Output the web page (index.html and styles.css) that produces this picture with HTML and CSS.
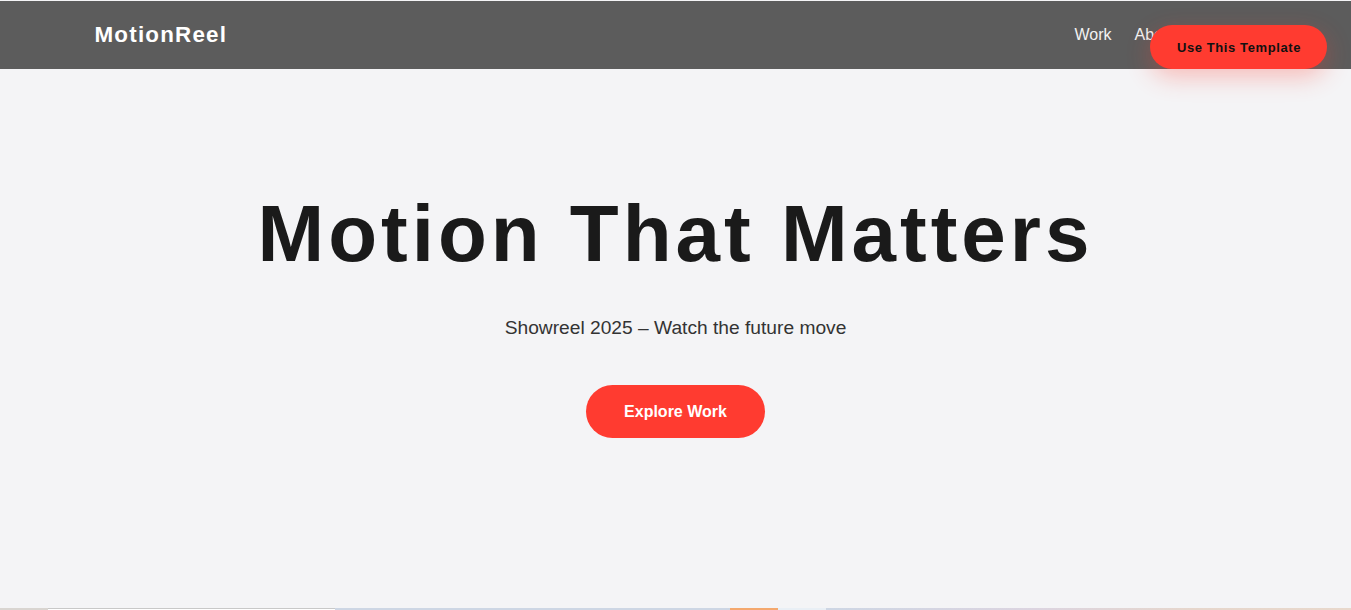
FILE: index.html
```html
<!DOCTYPE html>
<html lang="en">
<head>
<meta charset="utf-8">
<title>MotionReel</title>
<link rel="stylesheet" href="styles.css">
</head>
<body>
<div class="page">
  <header class="site-header">
    <div class="container header-inner">
      <div class="logo">MotionReel</div>
      <nav class="nav">
        <a href="#">Work</a>
        <a href="#">About</a>
        <a href="#">Contact</a>
      </nav>
    </div>
  </header>
  <a class="template-btn" href="#">Use This Template</a>
  <section class="hero">
    <h1 class="hero-title">Motion That Matters</h1>
    <p class="hero-sub">Showreel 2025 – Watch the future move</p>
    <a class="hero-btn" href="#">Explore Work</a>
  </section>
  <section class="strip">
    <div class="seg seg-a"></div>
    <div class="seg seg-b"></div>
    <div class="seg seg-c"></div>
    <div class="seg seg-d"></div>
    <div class="seg seg-e"></div>
    <div class="seg seg-f"></div>
  </section>
</div>
</body>
</html>
```
FILE: styles.css
```css
* { box-sizing: border-box; }
html, body { margin: 0; padding: 0; }
body {
  background: #f4f4f6;
  font-family: "Liberation Sans", Arial, sans-serif;
  color: #1a1a1a;
  overflow: hidden;
}
.page { padding-top: 1px; position: relative; }
a { text-decoration: none; }

.site-header {
  background: #5c5c5c;
  height: 68px;
}
.container {
  max-width: 1200px;
  margin: 0 auto;
  padding: 0 20px;
}
.header-inner {
  height: 100%;
  display: flex;
  align-items: center;
  justify-content: space-between;
}
.logo {
  color: #ffffff;
  font-weight: 700;
  font-size: 22.4px;
  letter-spacing: 1.2px;
  margin-left: -1px;
}
.nav {
  display: flex;
  gap: 23px;
  padding-right: 1px;
}
.nav a {
  color: #f2f2f2;
  font-size: 16px;
}

.template-btn {
  position: absolute;
  top: 25px;
  right: 24px;
  height: 44px;
  padding: 0 26px 0 27px;
  display: flex;
  align-items: center;
  background: #ff3b30;
  color: #111;
  font-weight: 700;
  font-size: 13px;
  letter-spacing: 0.6px;
  border-radius: 999px;
  box-shadow: 0 8px 24px rgba(255, 59, 48, 0.3);
}

.hero {
  height: 539px;
  display: flex;
  flex-direction: column;
  align-items: center;
  padding-top: 119px;
}
.hero-title {
  margin: 0;
  font-size: 80px;
  line-height: 92px;
  font-weight: 700;
  letter-spacing: 4px;
  color: #1a1a1a;
}
.hero-sub {
  margin: 37px 0 0;
  font-size: 19.2px;
  line-height: 22px;
  color: #333;
}
.hero-btn {
  margin-top: 46px;
  background: #ff3b30;
  color: #fff;
  font-weight: 700;
  font-size: 16px;
  line-height: 19px;
  padding: 17px 38px;
  border-radius: 999px;
}

.strip {
  display: flex;
  height: 200px;
}
.seg { height: 100%; }
.seg-a { width: 48px; background: #d9d5d1; }
.seg-b { width: 287px; background: #ffffff; border-top: 1px solid #c8c8c8; }
.seg-c { width: 395px; background: #cdd6e4; }
.seg-d { width: 48px; background: #f4a86e; }
.seg-e { width: 48px; background: #e9eff5; }
.seg-f { flex: 1; background: linear-gradient(90deg, #cdd6e4 0%, #dcd4e0 40%, #e6d6cc 70%, #e8d8cc 100%); }
```
